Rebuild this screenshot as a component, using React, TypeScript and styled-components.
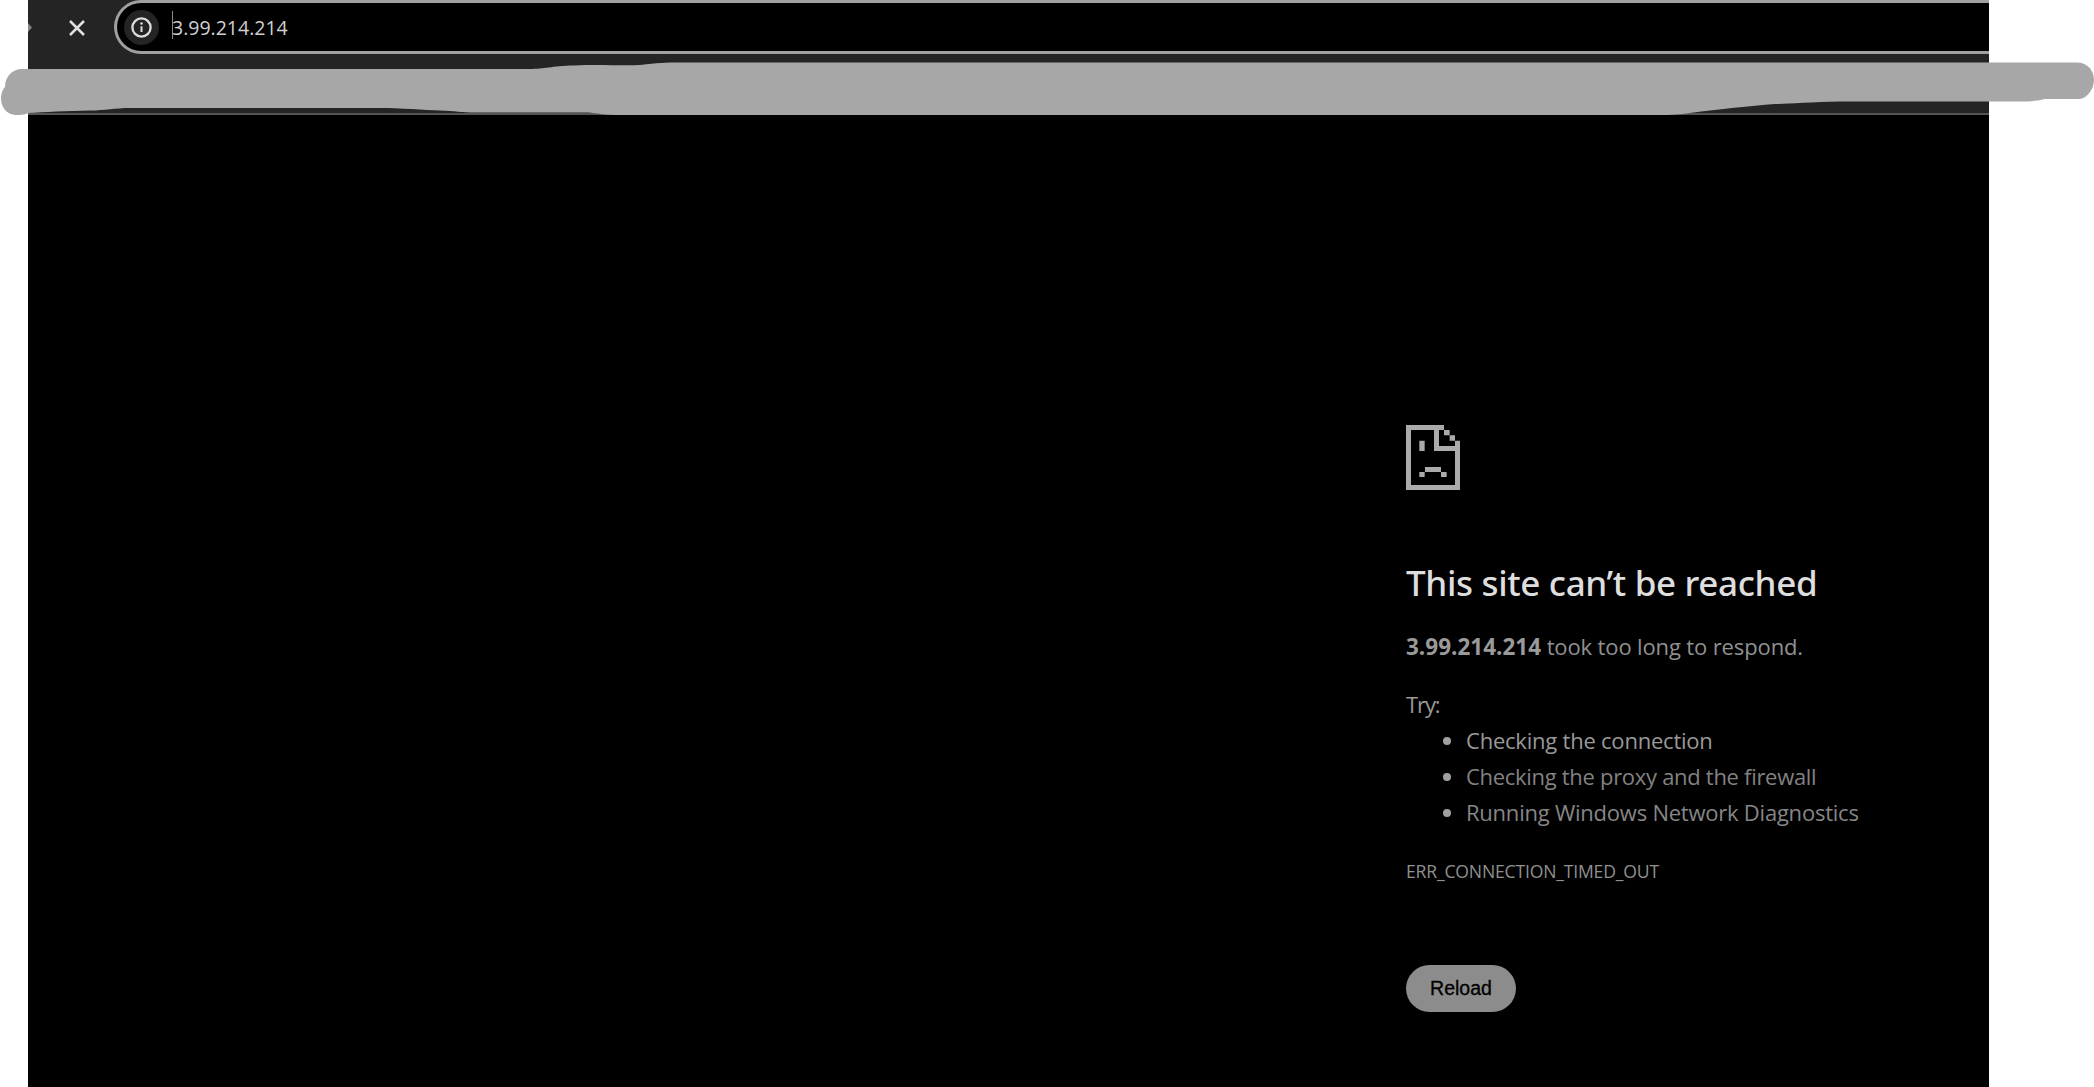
import React from "react";
import styled, { createGlobalStyle } from "styled-components";

const GlobalStyle = createGlobalStyle`
  * { box-sizing: border-box; }
  body {
    margin: 0;
    background: #fff;
    font-family: "Open Sans", "Noto Sans", sans-serif;
    overflow: hidden;
  }
`;

const Canvas = styled.div`
  position: relative;
  width: 2094px;
  height: 1087px;
  padding-left: 28px;
  overflow: hidden;
`;

const Browser = styled.div`
  display: flex;
  flex-direction: column;
  width: 1961px;
  height: 1087px;
  background: #000;
`;

const Toolbar = styled.header`
  display: flex;
  align-items: flex-start;
  height: 115px;
  background: #242424;
  border-bottom: 2px solid #555;
`;

const ForwardTip = styled.svg`
  width: 4px;
  height: 10px;
  margin-top: 22px;
  flex: none;
`;

const StopButton = styled.button`
  display: flex;
  align-items: center;
  justify-content: center;
  width: 34px;
  height: 34px;
  margin: 10.5px 20px 0 28px;
  padding: 0;
  border: 0;
  background: none;
`;

const AddressBar = styled.div`
  display: flex;
  align-items: center;
  flex: 1;
  height: 54px;
  padding-left: 7px;
  border: 3px solid #a0a0a0;
  border-right: 0;
  border-radius: 27px 0 0 27px;
  background: #000;
`;

const InfoBadge = styled.span`
  display: flex;
  align-items: center;
  justify-content: center;
  width: 35px;
  height: 35px;
  border-radius: 50%;
  background: #242424;
`;

const Caret = styled.span`
  width: 1px;
  height: 28px;
  margin: -4px -1px 0 13px;
  background: #8a8a8a;
`;

const Url = styled.span`
  padding-top: 1px;
  font-size: 19.5px;
  line-height: 28px;
  color: #d0d0d0;
`;

const Page = styled.main`
  display: flex;
  flex-direction: column;
  align-items: flex-start;
  padding: 310px 0 0 1378px;
  color: #9a9a9a;
`;

const SadFile = styled.svg`
  display: block;
  width: 54px;
  height: 65px;
`;

const Title = styled.h1`
  margin: 71px 0 0;
  font: 500 35px/43px "Noto Sans", sans-serif;
  letter-spacing: -0.34px;
  color: #dedede;
`;

const Line = styled.p<{ $top: number; $tracking?: number }>`
  margin: ${(p) => p.$top}px 0 0;
  font-size: 22px;
  line-height: 36px;
  letter-spacing: ${(p) => p.$tracking ?? 0}px;
  white-space: pre;
`;

const Host = styled.strong`
  font-size: 22.5px;
  font-weight: 700;
`;

const Message = styled.span<{ $tracking: number; $color?: string }>`
  letter-spacing: ${(p) => p.$tracking}px;
  color: ${(p) => p.$color ?? "#919191"};
`;

const Tips = styled.ul`
  margin: 0;
  padding: 0 0 0 37px;
  list-style: none;
`;

const Tip = styled.li`
  display: flex;
  align-items: center;
  gap: 15px;
  height: 36px;
  font-size: 22px;
  line-height: 36px;
  white-space: nowrap;

  &::before {
    content: "";
    width: 8px;
    height: 8px;
    margin-top: 2px;
    border-radius: 50%;
    background: #a0a0a0;
  }
`;

const ErrorCode = styled.div`
  margin-top: 27px;
  font-size: 17.6px;
  line-height: 29px;
  letter-spacing: -0.19px;
  color: #909090;
`;

const Reload = styled.button`
  width: 110px;
  height: 47px;
  margin-top: 79px;
  padding: 0;
  border: 0;
  border-radius: 24px;
  background: #8c8c8c;
  color: #000;
  font: 19.5px/47px "Liberation Sans", Arial, sans-serif;
  -webkit-text-stroke: 0.3px #000;
`;

const Stroke = styled.svg`
  position: absolute;
  left: 0;
  top: 0;
  width: 2094px;
  height: 130px;
  pointer-events: none;
`;

const tips: { text: string; tracking: number; color: string }[] = [
  { text: "Checking the connection", tracking: -0.22, color: "#999" },
  { text: "Checking the proxy and the firewall", tracking: -0.3, color: "#828282" },
  { text: "Running Windows Network Diagnostics", tracking: -0.23, color: "#868686" },
];

export default function App() {
  return (
    <Canvas>
      <GlobalStyle />
      <Browser>
        <Toolbar>
          <ForwardTip viewBox="0 0 4 10">
            <path d="M0 1L4 5.5L0 10Z" fill="#858585" />
          </ForwardTip>
          <StopButton aria-label="Stop">
            <svg width="18" height="18" viewBox="0 0 18 18">
              <path d="M2 2L16 16M16 2L2 16" stroke="#e0e0e0" strokeWidth="2.5" />
            </svg>
          </StopButton>
          <AddressBar>
            <InfoBadge>
              <svg width="21" height="21" viewBox="0 0 21 21">
                <circle cx="10.5" cy="10.5" r="9.1" fill="none" stroke="#dedede" strokeWidth="2.3" />
                <path d="M10.5 9.3V15" stroke="#dedede" strokeWidth="2" />
                <circle cx="10.5" cy="6.6" r="1.25" fill="#dedede" />
              </svg>
            </InfoBadge>
            <Caret />
            <Url>3.99.214.214</Url>
          </AddressBar>
        </Toolbar>
        <Page>
          <SadFile viewBox="0 0 162 195" preserveAspectRatio="none">
            <path
              fill="#ababab"
              d="M0 0H114V15H99V63H162V195H0ZM15 15V180H147V78H84V15ZM147 47H162V63H147ZM114 15H131V31H114ZM131 31H147V47H131ZM40 47H56V78H40ZM57 126H105V141H57ZM40 141H56V156H40ZM105 141H122V156H105Z"
              fillRule="evenodd"
            />
          </SadFile>
          <Title>This site can’t be reached</Title>
          <Line $top={24}>
            <Host>3.99.214.214</Host>
            <Message $tracking={-0.13}> took too long to respond.</Message>
          </Line>
          <Line $top={21} $tracking={-1.1}>Try:</Line>
          <Tips>
            {tips.map((tip) => (
              <Tip key={tip.text}>
                <Message $tracking={tip.tracking} $color={tip.color}>
                  {tip.text}
                </Message>
              </Tip>
            ))}
          </Tips>
          <ErrorCode>ERR_CONNECTION_TIMED_OUT</ErrorCode>
          <Reload>Reload</Reload>
        </Page>
      </Browser>
      <Stroke viewBox="0 0 2094 130">
        <path
          fill="#a7a7a7"
          d="M5 87C5 77 12 69 22 69H530C545 69 550 66 575 65.500C600 64 620 66 640 65C658 63 665 62.500 680 62.500H2078C2088 63 2094 71 2094 80C2094 89 2087 98 2080 99H2045L2038 100.500L2028 101.500H1840C1810 102 1785 104 1775 104C1750 106 1720 109 1690 113C1680 114.500 1670 115 1660 115H615C600 114.500 593 112.500 585 112.500H475C462 112.500 455 111 440 110.500C425 110 400 108 380 108H130C115 108 105 110.500 90 110.500C65 111 45 112 28 113C24 115 20 115 15 115C6 114 1 107 1 98C1 93 3 89 5 87Z"
        />
      </Stroke>
    </Canvas>
  );
}
